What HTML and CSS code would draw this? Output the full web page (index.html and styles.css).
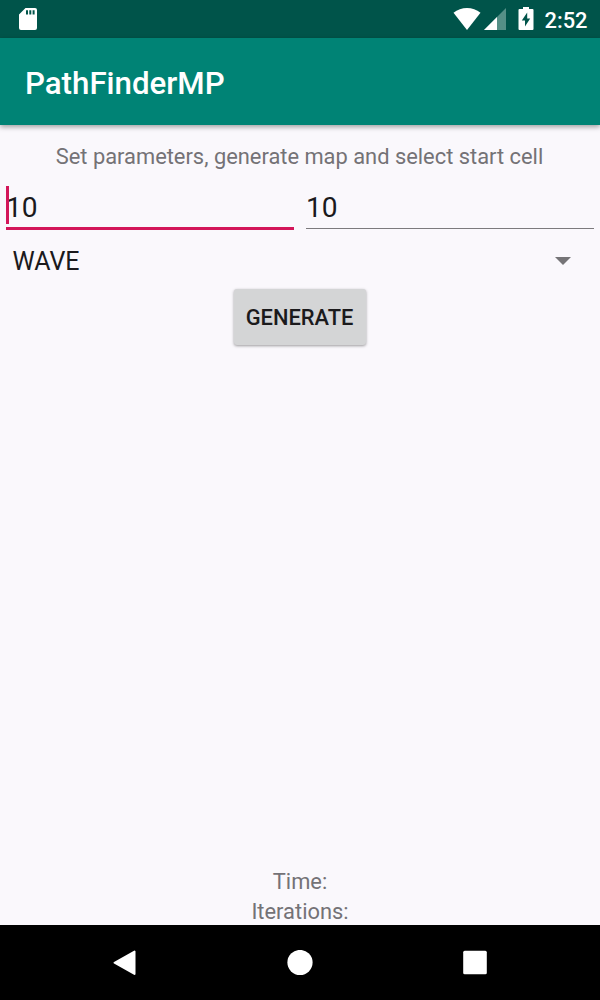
FILE: index.html
```html
<!DOCTYPE html>
<html lang="en">
<head>
<meta charset="utf-8">
<title>PathFinderMP</title>
<link rel="stylesheet" href="styles.css">
</head>
<body>
<div class="screen">
  <header class="status">
    <svg class="sd" width="18" height="22" viewBox="0 0 18 22"><path fill="#fff" fill-rule="evenodd" d="M6.500 0H16Q18 0 18 2V20Q18 22 16 22H2Q0 22 0 20V6.500ZM7 2.200V6.500H9V2.200ZM10.300 2.200V6.500H12.300V2.200ZM13.600 2.200V6.500H15.600V2.200Z"/></svg>
    <div class="indicators">
      <svg class="wifi" width="28" height="22" viewBox="0 0 28 22"><path fill="#fff" d="M.5 4.800C8-1.500 20-1.500 27.500 4.800L14 22Z"/></svg>
      <svg class="signal" width="22" height="22" viewBox="0 0 22 22"><path fill="#559087" d="M22 0V22H0Z"/><path fill="#fff" d="M13 9V22H0Z"/></svg>
      <svg class="battery" width="16" height="23" viewBox="0 0 16 23"><path fill="#fff" fill-rule="evenodd" d="M5 0H11V2H14.500Q15.500 2 15.500 3V22Q15.500 23 14.500 23H1.500Q.5 23 .5 22V3Q.5 2 1.500 2H5ZM9.200 5.500L3.800 13.500H7V19.500L12.200 11.500H9.200Z"/></svg>
      <span class="clock">2:52</span>
    </div>
  </header>
  <div class="appbar"><h1 class="title">PathFinderMP</h1></div>
  <main class="content">
    <p class="hint">Set parameters, generate map and select start cell</p>
    <div class="fields">
      <div class="field focused"><span class="caret"></span><span>10</span></div>
      <div class="field"><span>10</span></div>
    </div>
    <div class="spinner"><span>WAVE</span><svg width="16" height="8" viewBox="0 0 16 8"><path fill="#757477" d="M0 0H16L8 8Z"/></svg></div>
    <button class="generate">GENERATE</button>
    <div class="stats"><p class="stat">Time:</p><p class="stat">Iterations:</p></div>
  </main>
  <nav class="navbar">
    <svg width="26" height="26" viewBox="0 0 26 26"><path fill="#fff" stroke="#fff" stroke-width="2" stroke-linejoin="round" d="M22.500 1.500V24L2.500 12.750Z"/></svg>
    <svg width="26" height="26" viewBox="0 0 26 26"><circle fill="#fff" cx="13" cy="12.500" r="12.600"/></svg>
    <svg width="26" height="26" viewBox="0 0 26 26"><rect fill="#fff" x="1.200" y=".8" width="23.600" height="23.400" rx="1.500"/></svg>
  </nav>
</div>
</body>
</html>
```
FILE: styles.css
```css
* { box-sizing: border-box; margin: 0; padding: 0; }
body { font-family: Roboto, "Liberation Sans", sans-serif; background: #faf8fc; }
svg { display: block; flex: none; }
.screen { width: 600px; height: 1000px; display: flex; flex-direction: column; overflow: hidden; }
.status { height: 37.5px; background: #00544a; display: flex; justify-content: space-between; align-items: flex-start; padding: 8px 12.5px 0 19px; flex: none; }
.indicators { display: flex; align-items: flex-start; }
.signal { margin-left: 3px; }
.battery { margin: -1px 10.5px 0 12px; }
.clock { color: #fff; font-size: 21.875px; line-height: 25px; font-weight: 500; }
.appbar { height: 87.5px; flex: none; background: #008375; display: flex; align-items: center; padding: 5px 25px 0; box-shadow: 0 2px 5px rgba(0,0,0,.36); }
.title { color: #fff; font-size: 31.25px; line-height: 36px; font-weight: 500; }
.content { flex: 1; display: flex; flex-direction: column; align-items: center; padding-top: 19px; }
.hint, .stat { font-size: 21.875px; line-height: 26px; color: #747276; text-align: center; white-space: nowrap; }
.hint { margin-right: 1px; }
.fields { align-self: stretch; display: flex; gap: 12px; padding: 0 6px; margin-top: 16px; }
.field { position: relative; flex: 1; height: 43px; font-size: 28.125px; line-height: 43px; color: #1b1a1c; border-bottom: 1.5px solid #7c7a7d; }
.field.focused { height: 44px; border-bottom: 3px solid #d31659; }
.caret { position: absolute; left: 0; top: 0; width: 3px; height: 38px; background: #d31659; }
.spinner { align-self: stretch; display: flex; align-items: center; justify-content: space-between; height: 30px; margin-top: 16px; padding: 0 29.5px 0 12.5px; font-size: 25px; line-height: 30px; color: #1b1a1c; }
.spinner span { padding-top: 2px; }
.generate { width: 132px; height: 56px; margin-top: 13px; border: 0; border-radius: 3px; background: #d4d5d6; color: #1b1a1c; font: 500 21.875px/56px Roboto, "Liberation Sans", sans-serif; padding: 1px 1px 0 0; box-shadow: 0 1px 3px rgba(0,0,0,.38); }
.stats { margin: auto 0 -2px; }
.stat { line-height: 30px; }
.navbar { height: 75px; flex: none; background: #000; display: flex; justify-content: center; align-items: center; gap: 149px; }
```
